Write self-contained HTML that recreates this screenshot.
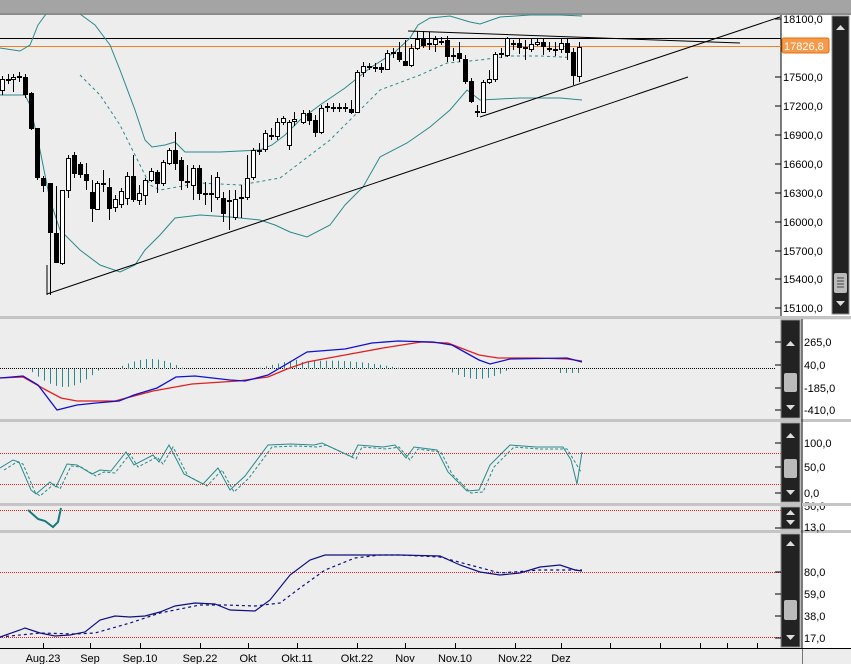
<!DOCTYPE html>
<html><head><meta charset="utf-8"><style>
html,body{margin:0;padding:0;background:#ededed;}
svg{display:block;font-family:"Liberation Sans",sans-serif;}
</style></head><body>
<svg id="s" width="851" height="664" viewBox="0 0 851 664" xmlns="http://www.w3.org/2000/svg">
<rect x="0" y="0" width="851" height="664" fill="#ededed"/>
<!-- top bar -->
<rect x="0" y="0" width="851" height="14" fill="#a4a4a4"/>
<rect x="0" y="13" width="851" height="2" fill="#8c8c8c"/>
<!-- right axis backgrounds -->
<rect x="781" y="15" width="70" height="302" fill="#fff"/>
<rect x="802" y="320" width="49" height="328" fill="#fff"/>
<!-- separators -->
<rect x="0" y="316" width="851" height="3" fill="#c4c4c4"/>
<rect x="0" y="419" width="851" height="3" fill="#c4c4c4"/>
<rect x="0" y="503" width="851" height="3" fill="#c4c4c4"/>
<rect x="0" y="530" width="851" height="3" fill="#c4c4c4"/>
<line x1="781" y1="15" x2="781" y2="316" stroke="#000"/>
<line x1="802" y1="319" x2="802" y2="664" stroke="#000"/>
<!-- horizontal lines main -->
<line x1="0" y1="38.5" x2="781" y2="38.5" stroke="#000"/>
<line x1="0" y1="46.5" x2="781" y2="46.5" stroke="#f08020"/>
<g id="bands" fill="none" stroke="#2a8a8a" stroke-width="1">
<polyline points="0,48 20,51 30,45 38,25 46,14"/>
<polyline points="80,14 95,25 110,45 120,70 135,110 145,140 152,147 165,145 175,142 185,152 220,152 260,150 272,145 285,135 300,120 320,105 345,88 370,68 395,52 410,38 418,25 430,18 450,16 470,22 480,24 500,17 530,15 560,15 582,16"/>
<polyline points="0,95 25,95 30,105 40,150 50,200 60,230 80,250 100,265 120,272 135,265 145,250 160,235 175,218 200,215 230,217 260,220 275,225 290,232 307,237 330,225 345,205 363,187 380,157 407,143 430,127 450,110 467,90 480,100 500,99 520,98 560,98 582,100"/>
</g>
<polyline fill="none" stroke="#2a8a8a" stroke-dasharray="3,3" points="80,75 100,95 120,125 135,155 150,185 160,190 200,183 240,185 280,178 330,140 380,90 420,75 447,63 480,60 510,56 540,56 582,58"/>
<!-- trendlines -->
<line x1="47" y1="294" x2="688" y2="77" stroke="#000"/>
<line x1="480" y1="117" x2="780" y2="17" stroke="#000"/>
<line x1="408" y1="31" x2="740" y2="43" stroke="#000"/>
<line x1="47" y1="265" x2="47" y2="295" stroke="#000"/>
<g id="candles"></g>
<!-- main axis labels -->
<g font-size="11" fill="#000">
<text x="783" y="23">18100,0</text>
<text x="783" y="81">17500,0</text>
<text x="783" y="110">17200,0</text>
<text x="783" y="139">16900,0</text>
<text x="783" y="168">16600,0</text>
<text x="783" y="197">16300,0</text>
<text x="783" y="226">16000,0</text>
<text x="783" y="255">15700,0</text>
<text x="783" y="283">15400,0</text>
<text x="783" y="312">15100,0</text>
</g>
<g stroke="#000">
<line x1="775" y1="19" x2="781" y2="19"/><line x1="775" y1="77" x2="781" y2="77"/><line x1="775" y1="106" x2="781" y2="106"/><line x1="775" y1="135" x2="781" y2="135"/><line x1="775" y1="164" x2="781" y2="164"/><line x1="775" y1="193" x2="781" y2="193"/><line x1="775" y1="222" x2="781" y2="222"/><line x1="775" y1="251" x2="781" y2="251"/><line x1="775" y1="279" x2="781" y2="279"/><line x1="775" y1="308" x2="781" y2="308"/>
</g>
<rect x="782" y="38" width="47" height="15" rx="2" fill="#f59a4a" stroke="#e07010"/>
<text x="784" y="50" font-size="11" fill="#fff">17826,8</text>
<!-- top scrollbar -->
<rect x="832" y="16" width="17" height="298" fill="#222" stroke="#888"/>
<polygon points="836,30 845,30 840.5,25" fill="#ddd"/>
<polygon points="836,301 845,301 840.5,306" fill="#ddd"/>
<rect x="834" y="273" width="13" height="20" rx="2" fill="#bbb"/>
<g stroke="#444"><line x1="837" y1="278" x2="844" y2="278"/><line x1="837" y1="281" x2="844" y2="281"/><line x1="837" y1="284" x2="844" y2="284"/><line x1="837" y1="287" x2="844" y2="287"/></g>
<!-- MACD -->
<line x1="0" y1="368.5" x2="775" y2="368.5" stroke="#000" stroke-dasharray="1,1"/>
<g id="hist" stroke="#2a8a8a"></g>
<polyline fill="none" stroke="#e02020" stroke-width="1.3" points="0,378 23,377 46,390 61,398 77,401 115,401 153,391 192,384 238,381 268,377 287,369 307,362 345,355 383,348 421,342 448,343 479,355 498,358 536,358 567,359 582,361"/>
<polyline fill="none" stroke="#1010d0" stroke-width="1.3" points="0,378 23,376 38,385 57,410 77,405 96,403 119,401 134,395 157,388 176,377 195,376 230,380 245,381 268,375 307,352 345,349 372,343 398,341 433,342 452,345 479,360 490,364 510,359 567,358 582,362"/>
<!-- Stoch -->
<line x1="0" y1="453.5" x2="781" y2="453.5" stroke="#e02020" stroke-dasharray="1,1"/>
<line x1="0" y1="484.5" x2="781" y2="484.5" stroke="#e02020" stroke-dasharray="1,1"/>
<polyline id="st" fill="none" stroke="#2a8a8a" points="0,468 13,460 19,462 31,490 36,494 50,482 56,487 67,464 77,465 92,474 100,470 111,471 126,452 134,465 153,455 159,462 169,445 184,474 203,484 218,468 230,490 245,476 268,445 291,444 314,445 322,443 352,457 358,445 383,447 395,445 406,458 414,447 437,450 448,472 467,491 479,490 490,465 510,445 536,447 563,447 571,460 577,484 582,452"/>
<polyline fill="none" stroke="#2a8a8a" stroke-dasharray="3,2" transform="translate(4,2)" points="0,468 13,460 19,462 31,490 36,494 50,482 56,487 67,464 77,465 92,474 100,470 111,471 126,452 134,465 153,455 159,462 169,445 184,474 203,484 218,468 230,490 245,476 268,445 291,444 314,445 322,443 352,457 358,445 383,447 395,445 406,458 414,447 437,450 448,472 467,491 479,490 490,465 510,445 536,447 563,447 571,460 577,470"/>
<!-- small panel -->
<line x1="0" y1="510.5" x2="781" y2="510.5" stroke="#e02020" stroke-dasharray="1,1"/>
<polyline fill="none" stroke="#1a7a7a" stroke-width="2" points="28,510 38,519 45,521 53,527 58,522 61,508"/>
<!-- bottom panel -->
<line x1="0" y1="572.5" x2="781" y2="572.5" stroke="#e02020" stroke-dasharray="1,1"/>
<line x1="0" y1="637.5" x2="781" y2="637.5" stroke="#e02020" stroke-dasharray="1,1"/>
<polyline fill="none" stroke="#101080" stroke-width="1.2" points="0,637 20,630 25,628 40,633 55,636 70,635 85,632 100,620 115,616 130,617 145,616 160,612 175,606 195,603 215,604 230,610 255,611 270,600 290,575 310,560 325,555 345,555 375,555 400,555 440,556 460,565 480,572 500,575 520,573 540,567 560,565 575,570 582,571"/>
<polyline fill="none" stroke="#101080" stroke-width="1.2" stroke-dasharray="3,3" points="0,637 40,633 75,634 95,633 130,623 160,613 200,605 225,605 255,606 280,603 300,588 325,570 355,558 380,555 400,555 440,557 470,565 500,573 540,570 582,570"/>
<!-- lower scrollbars -->
<g fill="#222" stroke="#888">
<rect x="781" y="320" width="19" height="98"/>
<rect x="781" y="423" width="19" height="79"/>
<rect x="781" y="507" width="19" height="22"/>
<rect x="781" y="534" width="19" height="113"/>
</g>
<g fill="#ddd">
<polygon points="786,346 795,346 790.5,341"/><polygon points="786,405 795,405 790.5,410"/>
<polygon points="786,438 795,438 790.5,433"/><polygon points="786,490 795,490 790.5,495"/>
<polygon points="786,515 795,515 790.5,510"/><polygon points="786,520 795,520 790.5,525"/>
<polygon points="786,546 795,546 790.5,541"/><polygon points="786,635 795,635 790.5,640"/>
</g>
<g fill="#bbb"><rect x="784" y="373" width="13" height="19" rx="2"/><rect x="784" y="459" width="13" height="19" rx="2"/><rect x="784" y="600" width="13" height="20" rx="2"/></g>
<g stroke="#000">
<line x1="775" y1="342" x2="781" y2="342"/><line x1="775" y1="365" x2="781" y2="365"/><line x1="775" y1="388" x2="781" y2="388"/><line x1="775" y1="410" x2="781" y2="410"/>
<line x1="775" y1="443" x2="781" y2="443"/><line x1="775" y1="467" x2="781" y2="467"/><line x1="775" y1="493" x2="781" y2="493"/>
<line x1="775" y1="528" x2="781" y2="528"/>
<line x1="775" y1="572" x2="781" y2="572"/><line x1="775" y1="594" x2="781" y2="594"/><line x1="775" y1="616" x2="781" y2="616"/><line x1="775" y1="638" x2="781" y2="638"/>
</g>
<g font-size="11" fill="#000">
<text x="804" y="346">265,0</text><text x="804" y="369">40,0</text><text x="804" y="392">-185,0</text><text x="804" y="414">-410,0</text>
<text x="804" y="447">100,0</text><text x="804" y="471">50,0</text><text x="804" y="497">0,0</text>
<text x="804" y="510">50,0</text><text x="804" y="531">13,0</text>
<text x="804" y="576">80,0</text><text x="804" y="598">59,0</text><text x="804" y="620">38,0</text><text x="804" y="642">17,0</text>
</g>
<rect x="802" y="503" width="49" height="3" fill="#c4c4c4"/>
<!-- bottom axis -->
<rect x="0" y="649" width="802" height="15" fill="#ededed"/>
<line x1="0" y1="648.5" x2="851" y2="648.5" stroke="#000"/>
<g id="xt" stroke="#000"></g>
<g font-size="11" fill="#000" text-anchor="middle">
<text x="43" y="662">Aug.23</text><text x="90" y="662">Sep</text><text x="140" y="662">Sep.10</text><text x="200" y="662">Sep.22</text><text x="248" y="662">Okt</text><text x="297" y="662">Okt.11</text><text x="357" y="662">Okt.22</text><text x="405" y="662">Nov</text><text x="455" y="662">Nov.10</text><text x="515" y="662">Nov.22</text><text x="561" y="662">Dez</text>
</g>
</svg>
<script>
var NS="http://www.w3.org/2000/svg";
function el(p,n,a){var e=document.createElementNS(NS,n);for(var k in a)e.setAttribute(k,a[k]);p.appendChild(e);return e;}
var C=[[2,90,79,76,95],[8,80,79,74,84],[13,79,77,74,92],[19,77,76,72,82],[25,77,94,74,98],[31,93,128,92,130],[37,128,177,128,180],[43,178,185,176,192],[50,183,232,183,295],[56,233,262,186,262],[62,263,190,190,265],[68,190,158,155,198],[74,155,173,152,178],[80,164,174,162,178],[86,174,180,163,190],[92,192,208,180,222],[97,209,183,181,210],[103,183,184,170,192],[109,187,208,178,220],[115,207,199,195,212],[121,204,191,188,208],[127,198,176,172,205],[133,176,199,155,202],[139,200,193,185,205],[145,195,180,178,205],[151,180,171,168,182],[157,172,183,170,193],[163,183,162,160,186],[169,163,150,148,165],[175,150,163,132,170],[181,160,180,157,190],[187,181,182,165,188],[193,185,168,165,200],[199,168,193,165,200],[205,193,194,182,205],[211,193,194,175,212],[217,197,177,172,200],[223,198,213,192,222],[229,200,201,190,230],[235,217,199,190,220],[241,197,198,185,218],[247,197,178,155,200],[253,177,150,148,180],[259,150,151,143,155],[265,149,133,130,152],[271,135,136,128,140],[277,136,122,118,140],[283,122,118,116,125],[289,145,122,120,150],[294,121,119,112,126],[303,122,113,110,124],[309,113,120,110,125],[315,120,132,115,137],[321,132,108,105,134],[327,107,106,103,112],[333,107,108,103,112],[339,107,108,103,112],[345,107,108,103,112],[351,109,112,100,114],[357,112,72,70,113],[363,72,66,62,77],[369,66,67,63,70],[375,67,68,63,72],[381,67,69,63,73],[387,69,53,50,70],[393,52,53,48,58],[399,52,59,42,62],[405,61,65,40,66],[411,65,48,44,67],[417,48,39,31,50],[423,39,45,31,48],[429,43,44,32,50],[435,44,39,36,52],[441,41,42,37,45],[447,40,56,36,62],[453,55,56,48,61],[459,53,58,42,62],[465,59,81,55,84],[471,81,101,78,103],[477,112,111,105,117],[483,112,82,80,113],[489,82,79,70,84],[495,79,54,52,82],[501,54,53,48,58],[507,55,38,37,57],[513,43,44,40,50],[519,43,47,38,54],[525,47,48,40,60],[531,49,44,38,52],[537,44,42,38,46],[543,42,46,38,55],[549,48,49,42,52],[555,49,50,42,56],[561,49,43,38,53],[567,43,52,38,60],[573,52,75,48,85],[579,76,47,42,82]];
var g=document.getElementById("candles");
C.forEach(function(c){var x=c[0],o=c[1],cl=c[2];
el(g,"line",{x1:x+.5,y1:c[3],x2:x+.5,y2:c[4],stroke:"#000"});
var t=Math.min(o,cl),b=Math.max(o,cl);if(b-t<1)b=t+1;
el(g,"rect",{x:x-1.5,y:t+.5,width:4,height:b-t,fill:cl>o?"#000":"#fff",stroke:"#000"});});
var h=document.getElementById("hist");
function hv(x){if(x<28)return 0;if(x<100)return 18*Math.sin((x-28)/72*Math.PI);if(x<115)return 0;if(x<185)return -10*Math.sin((x-115)/70*Math.PI);if(x<255)return 0;if(x<405)return -12*Math.sin((x-255)/150*Math.PI)*(x<300?1:0.7);if(x<445)return 0;if(x<510)return 10*Math.sin((x-445)/65*Math.PI);if(x<560)return 0;return 4;}
for(var x=2;x<584;x+=6){var v=hv(x);if(Math.abs(v)>0.5)el(h,"line",{x1:x+.5,y1:369,x2:x+.5,y2:369+v});}
var xt=document.getElementById("xt");
[43,90,140,200,248,297,357,405,455,515,561,610,660,700,727,757].forEach(function(x){el(xt,"line",{x1:x+.5,y1:643,x2:x+.5,y2:648});});
</script>
</body></html>
